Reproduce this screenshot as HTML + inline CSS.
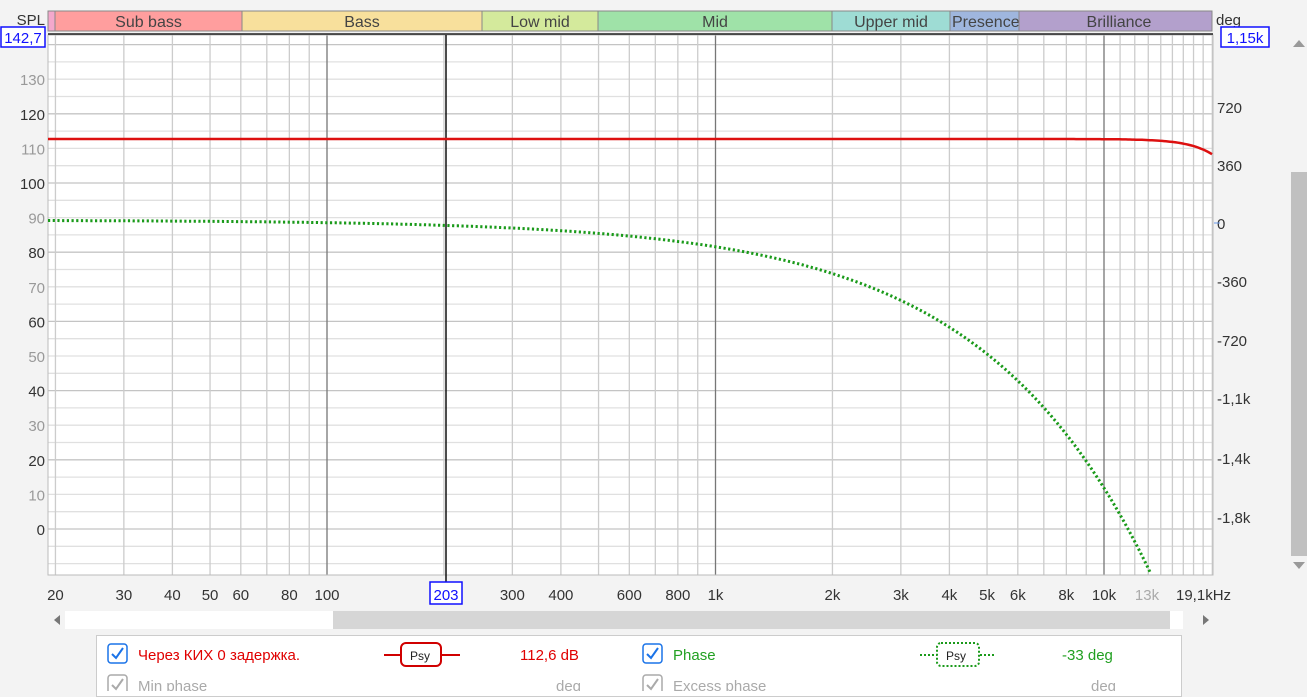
<!DOCTYPE html>
<html><head><meta charset="utf-8"><style>
body{margin:0;width:1307px;height:691px;background:#f3f3f3;overflow:hidden;font-family:"Liberation Sans","DejaVu Sans",sans-serif;position:relative}
.a{position:absolute}
svg text{font-family:"Liberation Sans","DejaVu Sans",sans-serif}
</style></head><body>
<svg id="s" class="a" style="left:0;top:0" width="1307" height="691" xmlns="http://www.w3.org/2000/svg"></svg>
<div class="a" style="left:96px;top:635px;width:1084px;height:60px;background:#fff;border:1px solid #ccc"></div>
<svg class="a" style="left:0;top:0" width="1307" height="691">
<g font-size="15">
<rect x="108" y="644" width="19" height="19" rx="3" fill="#fff" stroke="#1a73e8" stroke-width="1.5"/>
<path d="M112 654 l4 4 l7 -10" fill="none" stroke="#1a73e8" stroke-width="2"/>
<text x="138" y="660" fill="#e00000">Через КИХ 0 задержка.</text>
<line x1="384" y1="655" x2="460" y2="655" stroke="#d00000" stroke-width="2"/>
<rect x="401" y="643" width="40" height="23" rx="5" fill="#fff" stroke="#d00000" stroke-width="2"/>
<text x="410" y="660" font-size="12" fill="#222">Psy</text>
<text x="520" y="660" fill="#e00000">112,6 dB</text>
<rect x="643" y="644" width="19" height="19" rx="3" fill="#fff" stroke="#1a73e8" stroke-width="1.5"/>
<path d="M647 654 l4 4 l7 -10" fill="none" stroke="#1a73e8" stroke-width="2"/>
<text x="673" y="660" fill="#22a022">Phase</text>
<line x1="920" y1="655" x2="996" y2="655" stroke="#1a9a1a" stroke-width="2" stroke-dasharray="2 2"/>
<rect x="937" y="643" width="42" height="23" rx="4" fill="#fff" stroke="#1a9a1a" stroke-width="2" stroke-dasharray="2 2"/>
<text x="946" y="660" font-size="12" fill="#222">Psy</text>
<text x="1062" y="660" fill="#22a022">-33 deg</text>
<rect x="108" y="675" width="19" height="19" rx="3" fill="#fff" stroke="#aaa" stroke-width="1.5"/>
<path d="M112 685 l4 4 l7 -10" fill="none" stroke="#aaa" stroke-width="2"/>
<text x="138" y="691" fill="#aaa">Min phase</text>
<text x="556" y="691" fill="#aaa">deg</text>
<rect x="643" y="675" width="19" height="19" rx="3" fill="#fff" stroke="#aaa" stroke-width="1.5"/>
<path d="M647 685 l4 4 l7 -10" fill="none" stroke="#aaa" stroke-width="2"/>
<text x="673" y="691" fill="#aaa">Excess phase</text>
<text x="1091" y="691" fill="#aaa">deg</text>
</g></svg>
<script>
var s=document.getElementById('s'),h='';
var X0=48,X1=1213,Y0=35,Y1=575;
function fx(f){return 327+388.5*Math.log10(f/100);}
h+='<rect x="'+X0+'" y="'+Y0+'" width="'+(X1-X0)+'" height="'+(Y1-Y0)+'" fill="#fff"/>';
for(var k=-3;k<=28;k++){var y=529-17.3*k;if(y<Y0||y>Y1)continue;var c=(k%4==0)?'#c4c4c4':'#e0e0e0';h+='<line x1="'+X0+'" x2="'+X1+'" y1="'+y+'" y2="'+y+'" stroke="'+c+'" stroke-width="1.3"/>';}
var fs=[];for(var d=10;d<=10000;d*=10){for(var m=1;m<10;m++)fs.push(m*d);}
for(var f=11000;f<20000;f+=1000)fs.push(f);
fs.push(19);
fs.forEach(function(f){var x=fx(f);if(x<X0||x>X1)return;var c=(f==100||f==1000||f==10000)?'#777':'#ccc';h+='<line x1="'+x+'" x2="'+x+'" y1="'+Y0+'" y2="'+Y1+'" stroke="'+c+'" stroke-width="1.3"/>';});
h+='<rect x="'+X0+'" y="'+Y0+'" width="'+(X1-X0)+'" height="'+(Y1-Y0)+'" fill="none" stroke="#bbb"/>';
h+='<line x1="'+X0+'" x2="'+X1+'" y1="34" y2="34" stroke="#222" stroke-width="1.5"/>';
h+='<line x1="446" x2="446" y1="35" y2="583" stroke="#111" stroke-width="1.5"/>';
var b=[[48,55,'#f4a8cc',''],[55,242,'#ff9e9e','Sub bass'],[242,482,'#f8e09c','Bass'],[482,598,'#d4ea9c','Low mid'],[598,832,'#9fe2a8','Mid'],[832,950,'#9edcd4','Upper mid'],[950,1019,'#9fb6de','Presence'],[1019,1212,'#b3a0cc','Brilliance']];
b.forEach(function(q){h+='<rect x="'+q[0]+'" y="11" width="'+(q[1]-q[0])+'" height="20" fill="'+q[2]+'" stroke="#888" stroke-width="1"/>';if(q[3])h+='<text x="'+(q[3]=='Presence'?952:(q[0]+q[1])/2)+'" y="27" font-size="16" fill="#444" text-anchor="'+(q[3]=='Presence'?'start':'middle')+'">'+q[3]+'</text>';});
h+='<rect x="1019" y="11" width="193" height="20" fill="#b3a0cc" stroke="#888"/><text x="1119" y="27" font-size="16" fill="#444" text-anchor="middle">Brilliance</text>';
h+='<text x="45" y="25" font-size="15" fill="#333" text-anchor="end">SPL</text>';
for(var v=0;v<=130;v+=10){var y=529-3.46*v;h+='<text x="45" y="'+(y+6)+'" font-size="15" fill="'+(v%20==0?'#333':'#999')+'" text-anchor="end">'+v+'</text>';}
h+='<rect x="1" y="27" width="44" height="20" fill="#fff" stroke="#1010ff" stroke-width="1.5"/><text x="23" y="43" font-size="15" fill="#1010ff" text-anchor="middle">142,7</text>';
h+='<text x="1216" y="25" font-size="15" fill="#333">deg</text>';
[[720,107],[360,165],[0,223],[-360,281],[-720,340],['-1,1k',398],['-1,4k',458],['-1,8k',517]].forEach(function(q){h+='<text x="1217" y="'+(q[1]+6)+'" font-size="15" fill="#333">'+q[0]+'</text>';});
h+='<line x1="1214" x2="1220" y1="223" y2="223" stroke="#6a9ae8"/>';
h+='<rect x="1221" y="27" width="48" height="20" fill="#fff" stroke="#1010ff" stroke-width="1.5"/><text x="1245" y="43" font-size="15" fill="#1010ff" text-anchor="middle">1,15k</text>';
[[20,'20'],[30,'30'],[40,'40'],[50,'50'],[60,'60'],[80,'80'],[100,'100'],[300,'300'],[400,'400'],[600,'600'],[800,'800'],[1000,'1k'],[2000,'2k'],[3000,'3k'],[4000,'4k'],[5000,'5k'],[6000,'6k'],[8000,'8k'],[10000,'10k']].forEach(function(q){h+='<text x="'+fx(q[0])+'" y="600" font-size="15" fill="#333" text-anchor="middle">'+q[1]+'</text>';});
h+='<text x="1147" y="600" font-size="15" fill="#aaa" text-anchor="middle">13k</text><text x="1176" y="600" font-size="15" fill="#333">19,1kHz</text>';
h+='<rect x="430" y="582" width="32" height="22" fill="#fff" stroke="#1010ff" stroke-width="1.5"/><text x="446" y="600" font-size="15" fill="#1010ff" text-anchor="middle">203</text>';
var p='',g='';
for(var x=X0;x<=X1;x+=2){var f=100*Math.pow(10,(x-327)/388.5);var r=139+16*Math.pow(f/19100,7);p+=(p?'L':'M')+x+' '+r.toFixed(1);var gy=220+0.0268*f;if(gy<=Y1)g+=(g?'L':'M')+x+' '+gy.toFixed(1);}
h+='<path d="'+g+'" fill="none" stroke="#1a9a1a" stroke-width="3" stroke-dasharray="2.2 2.5"/>';
h+='<path d="'+p+'" fill="none" stroke="#dd1010" stroke-width="2.5"/>';
h+='<rect x="65" y="611" width="1118" height="18" fill="#fff"/><rect x="333" y="611" width="837" height="18" fill="#d6d6d6"/>';
h+='<path d="M60 615 L54 620 L60 625Z" fill="#777"/><path d="M1203 615 L1209 620 L1203 625Z" fill="#777"/>';
h+='<rect x="1291" y="172" width="16" height="384" fill="#c0c0c0"/>';
h+='<path d="M1293 47 L1299 40 L1305 47Z" fill="#999"/><path d="M1293 562 L1299 569 L1305 562Z" fill="#999"/>';
s.innerHTML=h;
</script>
</body></html>
